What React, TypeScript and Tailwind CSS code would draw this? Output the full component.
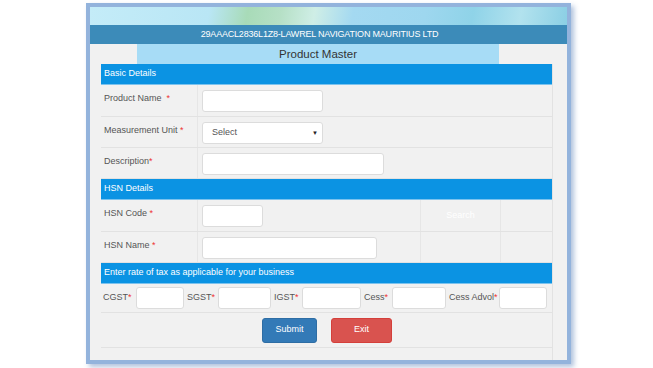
import React from "react";

function Req() {
  return <span className="text-[#e33]">*</span>;
}

function SectionHead({ title }: { title: string }) {
  return (
    <div className="h-[21px] bg-[#0b93e3] text-white text-[9px] flex items-center pl-[3px] border-b border-[#7cc3ee]">
      {title}
    </div>
  );
}

function Row({ label, h, children, extra }: { label: React.ReactNode; h: string; children: React.ReactNode; extra?: React.ReactNode }) {
  return (
    <div className={`flex border-b border-[#e2e2e2] ${h}`}>
      <div className="w-[97px] shrink-0 border-r border-[#e6e6e6] text-[9px] text-[#555] pl-[3px] pt-[7px]">{label}</div>
      <div className="flex-1 pl-[4px] pt-[5px]">{children}</div>
      {extra}
    </div>
  );
}

function Input({ w }: { w: string }) {
  return <div className={`${w} h-[22px] bg-white border border-[#dcdcdc] rounded-[3px]`} />;
}

export default function App() {
  return (
    <div className="w-[653px] h-[368px] bg-white pt-[3px] pl-[86px] font-['Liberation_Sans',Arial,sans-serif]">
      <div className="w-[485px] h-[361px] border-[4px] border-[#93b3dc] shadow-[3px_3px_5px_rgba(80,120,180,0.45)] bg-[#f1f1f1] flex flex-col overflow-hidden">
        {/* banner */}
        <div className="h-[18px] bg-[linear-gradient(100deg,#c4ecf8_0%,#b9e6f5_25%,#a8dbb8_33%,#b6e0c6_40%,#cfeee6_47%,#a4d9f1_55%,#9ed7ef_70%,#8fd3e8_80%,#b2e2ee_90%,#8bcfe4_100%)]" />
        <div className="h-[19px] bg-[#3c8bb9] text-white text-[9px] flex items-center justify-center pr-[18px] tracking-[-0.2px]">
          29AAACL2836L1Z8-LAWREL NAVIGATION MAURITIUS LTD
        </div>
        <div className="h-[20px] flex">
          <div className="ml-[47px] w-[362px] bg-[#a7dcf6] text-[#333] text-[11.5px] flex items-center justify-center pt-[1px]">
            Product Master
          </div>
        </div>

        <div className="ml-[11px] w-[452px] border-r border-[#e2e2e2] flex flex-col">
          <SectionHead title="Basic Details" />
          <Row h="h-[32px]" label={<>Product Name &nbsp;<Req /></>}>
            <Input w="w-[121px]" />
          </Row>
          <Row h="h-[31px]" label={<>Measurement Unit <Req /></>}>
            <div className="w-[121px] h-[22px] bg-white border border-[#dcdcdc] rounded-[3px] flex items-center justify-between pl-[9px] pr-[4px] text-[9px] text-[#555]">
              <span>Select</span>
              <span className="text-[6px] text-[#222]">▼</span>
            </div>
          </Row>
          <Row h="h-[31px]" label={<>Description<Req /></>}>
            <Input w="w-[182px]" />
          </Row>

          <SectionHead title="HSN Details" />
          <Row
            h="h-[32px]"
            label={<>HSN Code <Req /></>}
            extra={
              <>
                <div className="w-[81px] border-l border-r border-[#e6e6e6] text-white text-[9px] flex items-center justify-center">Search</div>
                <div className="w-[51px]" />
              </>
            }
          >
            <Input w="w-[61px]" />
          </Row>
          <Row
            h="h-[31px]"
            label={<>HSN Name <Req /></>}
            extra={
              <>
                <div className="w-[81px] border-l border-r border-[#e6e6e6]" />
                <div className="w-[51px]" />
              </>
            }
          >
            <Input w="w-[175px]" />
          </Row>

          <SectionHead title="Enter rate of tax as applicable for your business" />
          <div className="h-[29px] border-b border-[#e2e2e2] flex items-center pl-[2px] text-[9px] text-[#555]">
            <span className="w-[33px]">CGST<Req /></span>
            <Input w="w-[48px]" />
            <span className="ml-[3px] w-[31px]">SGST<Req /></span>
            <Input w="w-[53px]" />
            <span className="ml-[3px] w-[28px]">IGST<Req /></span>
            <Input w="w-[59px]" />
            <span className="ml-[3px] w-[28px]">Cess<Req /></span>
            <Input w="w-[54px]" />
            <span className="ml-[3px] w-[50px]">Cess Advol<Req /></span>
            <Input w="w-[48px]" />
          </div>
          <div className="h-[35px] border-b border-[#e2e2e2] flex items-center pl-[161px] gap-[14px]">
            <div className="w-[55px] h-[25px] bg-[#337ab7] border border-[#2e6da4] rounded-[3px] text-white text-[9px] flex items-center justify-center">Submit</div>
            <div className="w-[61px] h-[25px] bg-[#d9534f] border border-[#d43f3a] rounded-[3px] text-white text-[9px] flex items-center justify-center">Exit</div>
          </div>
          <div className="h-[12px]" />
        </div>
      </div>
    </div>
  );
}
